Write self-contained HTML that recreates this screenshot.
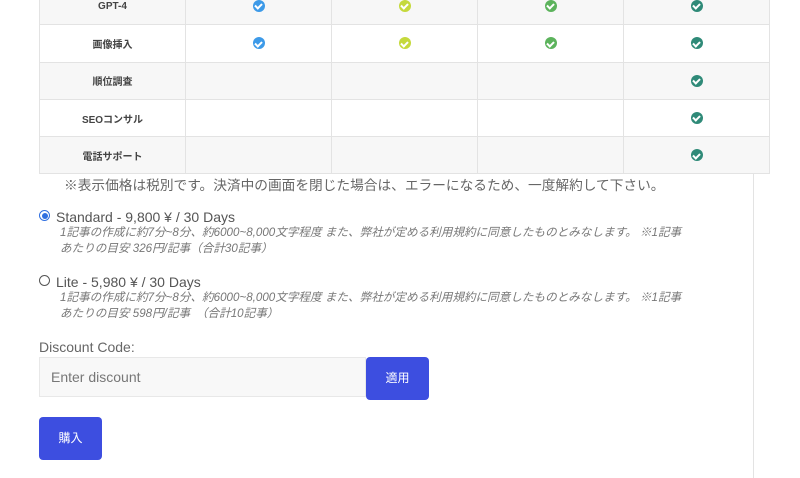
<!DOCTYPE html>
<html><head><meta charset="utf-8"><style>
*{margin:0;padding:0;box-sizing:border-box}
body{width:800px;height:478px;background:#fff;position:relative;overflow:hidden;font-family:"Liberation Sans","Noto Sans CJK JP",sans-serif;color:#555}
table{position:absolute;left:39px;top:-13px;border-collapse:collapse;width:731px}
td{border:1px solid #e3e3e3;height:37.3px;text-align:center;vertical-align:middle;width:146px}
td:first-child{font-size:10px;font-weight:bold;color:#444}
tr:nth-child(odd) td{background:#f7f7f7}
.c{display:inline-block;width:12px;height:12px;border-radius:50%;position:relative;vertical-align:middle}
.c:after{content:"";position:absolute;left:3.5px;top:2.5px;width:3px;height:5px;border:solid #fff;border-width:0 2px 2px 0;transform:rotate(45deg)}
.b{background:#3d9ae8}.l{background:#c5d93c}.g{background:#5cb35c}.t{background:#2f8a78}
.vl{position:absolute;left:753px;top:174px;width:1px;height:304px;background:#e3e3e3}
.note{position:absolute;left:64px;top:174px;font-size:13.7px;color:#666;white-space:nowrap}
.opt{position:absolute;left:39px;font-size:14px;color:#555}
.opt .r{display:inline-block;width:11px;height:11px;border:1px solid #555;border-radius:50%;margin-right:6px;vertical-align:1px;position:relative}
.opt .r.on{border-color:#2f6fe0}
.opt .r.on:after{content:"";position:absolute;left:1.5px;top:1.5px;width:6px;height:6px;border-radius:50%;background:#2f6fe0}
.d{font-size:11.6px;font-style:italic;color:#777;margin-left:21px;line-height:16px;width:636px}
.lab{position:absolute;left:39px;top:339px;font-size:14px;color:#666}
.inp{position:absolute;left:39px;top:357px;width:327px;height:40px;background:#f8f8f8;border:1px solid #e8e8e8;font-size:14px;color:#777;padding:11px 0 0 11px}
.btn{position:absolute;background:#3d4ee0;color:#fff;font-size:12px;border-radius:4px;text-align:center}
</style></head><body>
<table>
<tr><td>GPT-4</td><td><span class="c b"></span></td><td><span class="c l"></span></td><td><span class="c g"></span></td><td><span class="c t"></span></td></tr>
<tr><td>画像挿入</td><td><span class="c b"></span></td><td><span class="c l"></span></td><td><span class="c g"></span></td><td><span class="c t"></span></td></tr>
<tr><td>順位調査</td><td></td><td></td><td></td><td><span class="c t"></span></td></tr>
<tr><td>SEOコンサル</td><td></td><td></td><td></td><td><span class="c t"></span></td></tr>
<tr><td>電話サポート</td><td></td><td></td><td></td><td><span class="c t"></span></td></tr>
</table>
<div class="vl"></div>
<div class="note">※表示価格は税別です。決済中の画面を閉じた場合は、エラーになるため、一度解約して下さい。</div>
<div class="opt" style="top:209px"><span class="r on"></span>Standard - 9,800 ¥ / 30 Days
<div class="d">1記事の作成に約7分~8分、約6000~8,000文字程度 また、弊社が定める利用規約に同意したものとみなします。 ※1記事<br>あたりの目安 326円/記事（合計30記事）</div></div>
<div class="opt" style="top:274px"><span class="r"></span>Lite - 5,980 ¥ / 30 Days
<div class="d">1記事の作成に約7分~8分、約6000~8,000文字程度 また、弊社が定める利用規約に同意したものとみなします。 ※1記事<br>あたりの目安 598円/記事　（合計10記事）</div></div>
<div class="lab">Discount Code:</div>
<div class="inp">Enter discount</div>
<div class="btn" style="left:366px;top:357px;width:63px;height:43px;line-height:43px">適用</div>
<div class="btn" style="left:39px;top:417px;width:63px;height:43px;line-height:43px">購入</div>
</body></html>
